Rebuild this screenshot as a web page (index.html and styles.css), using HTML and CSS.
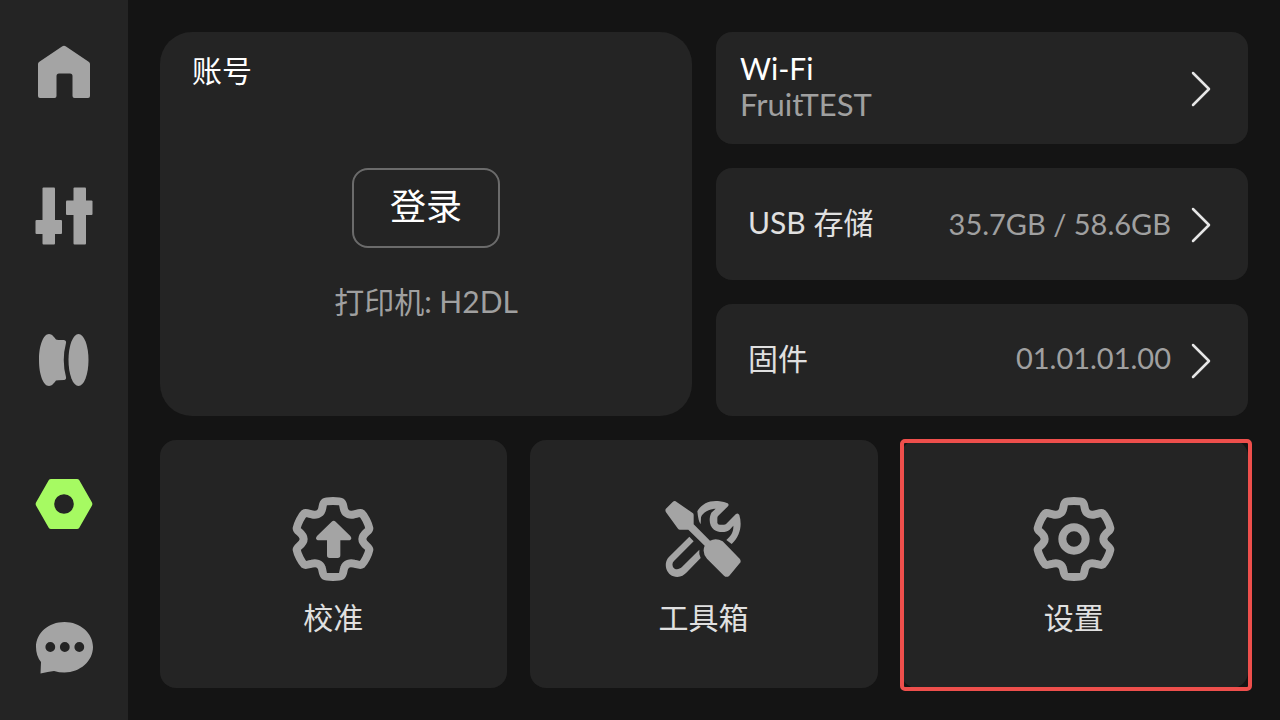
FILE: index.html
```html
<!DOCTYPE html>
<html lang="zh-CN">
<head>
<meta charset="utf-8">
<meta name="viewport" content="width=device-width, initial-scale=1">
<title>设置</title>
<link rel="stylesheet" href="styles.css">
</head>
<body>
<nav class="sidebar">
  <button class="nav-item" aria-label="主页">
    <svg width="54" height="54" viewBox="0 0 54 54"><path d="M25 1.500Q27 0 29 1.500L52 17Q53 18 53 19V51Q53 53 51 53H37.500Q35.500 53 35.500 51V31Q35.500 28.500 33 28.500H22Q19.500 28.500 19.500 31V51Q19.500 53 17.500 53H3Q1 53 1 51V19Q1 18 2 17Z"/></svg>
  </button>
  <button class="nav-item" aria-label="控制">
    <svg width="58" height="58" viewBox="0 0 58 58"><rect x="7.500" y=".5" width="12.500" height="57" rx="1"/><rect x=".5" y="33" width="26.500" height="14" rx="1"/><rect x="38.500" y=".5" width="12.500" height="57" rx="1"/><rect x="31" y="13.500" width="26.500" height="14.500" rx="1"/></svg>
  </button>
  <button class="nav-item" aria-label="耗材">
    <svg width="50" height="52" viewBox="0 0 50 52"><path d="M10 0C13 0 15 3 17 5.500Q18 6 25 6Q27.500 6.500 27 9Q22.500 26 27 43Q27.500 45.500 25 46Q18 46 17 46.500C15 49 13 52 10 52C4.500 52 0 41 0 26S4.500 0 10 0Z"/><ellipse cx="39.500" cy="26" rx="10" ry="26"/></svg>
  </button>
  <button class="nav-item nav-item-active" aria-label="设备" aria-current="page">
    <svg width="58" height="50" viewBox="0 0 58 50"><path fill-rule="evenodd" d="M16 0H42Q43.500 0 44.300 1.300L57 23.500Q57.700 25 57 26.500L44.300 48.700Q43.500 50 42 50H16Q14.500 50 13.700 48.700L1 26.500Q.3 25 1 23.500L13.700 1.300Q14.500 0 16 0ZM29 15.200A9.800 9.800 0 1 0 29 34.800A9.800 9.800 0 1 0 29 15.200Z"/></svg>
  </button>
  <button class="nav-item" aria-label="消息">
    <svg width="58" height="52" viewBox="0 0 58 52"><path fill-rule="evenodd" d="M29.500 0C45 0 58 11 58 25S45 50.500 29.500 50.500Q24 50.500 19 49Q13 49.500 5.500 51.500L6 40Q1 34 1 25C1 11 13.500 0 29.500 0ZM15.300 20.100A4.900 4.900 0 1 0 15.300 29.900A4.900 4.900 0 1 0 15.300 20.100ZM29.800 20.100A4.900 4.900 0 1 0 29.800 29.900A4.900 4.900 0 1 0 29.800 20.100ZM44.300 20.100A4.900 4.900 0 1 0 44.300 29.900A4.900 4.900 0 1 0 44.300 20.100Z"/></svg>
  </button>
</nav>
<main class="content">
  <div class="overview">
    <section class="account">
      <h1 class="account-title">账号</h1>
      <div class="account-body">
        <button class="login">登录</button>
        <p class="printer">打印机: H2DL</p>
      </div>
    </section>
    <div class="rows">
      <button class="row row-wifi">
        <span class="row-stack"><span class="row-name">Wi-Fi</span><span class="row-network">FruitTEST</span></span>
        <svg class="chevron" width="20" height="36" viewBox="0 0 20 36"><path d="M2 2L18 18L2 34"/></svg>
      </button>
      <button class="row">
        <span class="row-label">USB 存储</span>
        <span class="row-value">35.7GB / 58.6GB</span>
        <svg class="chevron" width="20" height="36" viewBox="0 0 20 36"><path d="M2 2L18 18L2 34"/></svg>
      </button>
      <button class="row">
        <span class="row-label">固件</span>
        <span class="row-value row-value-raised">01.01.01.00</span>
        <svg class="chevron" width="20" height="36" viewBox="0 0 20 36"><path d="M2 2L18 18L2 34"/></svg>
      </button>
    </div>
  </div>
  <div class="tiles">
    <button class="tile">
      <svg width="84" height="84" viewBox="64 51 252 252"><path class="gear" d="M190 63C205 63 212 64 215 66C222 71 220 80 224 91C228 103 242 106 253 103C262 101 272 97 276 100C285 108 296 130 299 145C300 154 278 160 278 177C278 194 300 200 299 209C296 224 285 246 276 254C272 257 262 253 253 251C242 248 228 251 224 263C220 274 222 283 215 288C212 290 205 291 190 291C175 291 168 290 165 288C158 283 160 274 156 263C152 251 138 248 127 251C118 253 108 257 104 254C95 246 84 224 81 209C80 200 102 194 102 177C102 160 80 154 81 145C84 130 95 108 104 100C108 97 118 101 127 103C138 106 152 103 156 91C160 80 158 71 165 66C168 64 175 63 190 63Z"/><path d="M186 125Q192 120 198 125L242 168Q249 177 240 181H212V226Q212 234 204 234H180Q172 234 172 226V181H144Q135 177 142 168Z"/></svg>
      <span>校准</span>
    </button>
    <button class="tile">
      <svg width="84" height="84" viewBox="64 51 252 252"><path d="M78 87L99 66Q105 60 111 66L159 99Q162 101 162 105V133L211 182Q229 172 249 184L300 236Q306 244 300 250L269 287Q261 294 253 287L202 236Q186 217 195 197L146 149H121Q117 149 115 146L79 97Q76 92 78 87Z"/><path d="M173 94C185 72 210 60 240 64Q254 65 264 70Q269 73 265 79L236 107Q233 110 233 114V128Q234 134 240 134H252Q257 134 260 131L288 103Q295 97 299 105C308 135 302 168 276 192L260 180C275 168 282 155 281 137L270 149C260 158 237 159 223 149C208 138 207 115 215 98L228 86C209 86 189 97 184 112L183 133Q176 125 173 94Z"/><path d="M149 170L87 232C69 251 80 291 113 291C125 290 133 285 140 278L183 234Q177 222 179 209L126 262C120 268 108 270 102 264C97 258 97 248 103 243L162 184Z"/></svg>
      <span>工具箱</span>
    </button>
    <button class="tile tile-marked">
      <svg width="84" height="84" viewBox="64 51 252 252"><path class="gear" d="M190 63C205 63 212 64 215 66C222 71 220 80 224 91C228 103 242 106 253 103C262 101 272 97 276 100C285 108 296 130 299 145C300 154 278 160 278 177C278 194 300 200 299 209C296 224 285 246 276 254C272 257 262 253 253 251C242 248 228 251 224 263C220 274 222 283 215 288C212 290 205 291 190 291C175 291 168 290 165 288C158 283 160 274 156 263C152 251 138 248 127 251C118 253 108 257 104 254C95 246 84 224 81 209C80 200 102 194 102 177C102 160 80 154 81 145C84 130 95 108 104 100C108 97 118 101 127 103C138 106 152 103 156 91C160 80 158 71 165 66C168 64 175 63 190 63Z"/><circle class="gear" cx="190" cy="177" r="35"/></svg>
      <span>设置</span>
    </button>
  </div>
</main>
</body>
</html>
```
FILE: styles.css
```css
* {
  box-sizing: border-box;
}

body {
  display: flex;
  min-height: 100vh;
  margin: 0;
  background: #141414;
  color: #e0e0e0;
  font-family: Lato, "Noto Sans CJK SC", sans-serif;
  font-size: 30px;
  line-height: 36px;
}

button {
  margin: 0;
  padding: 0;
  border: 0;
  background: none;
  color: inherit;
  font: inherit;
  cursor: pointer;
}

svg {
  display: block;
  flex: none;
  fill: #a4a4a4;
}

.sidebar {
  display: flex;
  flex: none;
  flex-direction: column;
  width: 128px;
  background: #242424;
}

.nav-item {
  display: flex;
  flex: 1;
  align-items: center;
  justify-content: center;
}

.nav-item-active svg {
  fill: #a6fa62;
}

.content {
  display: grid;
  flex: 1;
  grid-template-rows: auto 1fr;
  gap: 24px;
  padding: 32px;
}

.overview {
  display: grid;
  grid-template-columns: 1fr 1fr;
  gap: 24px;
}

.account {
  display: flex;
  flex-direction: column;
  padding: 20px 32px 97px;
  border-radius: 32px;
  background: #242424;
}

.account-title {
  margin: 0;
  color: #fff;
  font-size: 30px;
  font-weight: 400;
  line-height: 36px;
}

.account-body {
  display: flex;
  flex: 1;
  flex-direction: column;
  align-items: center;
  justify-content: flex-end;
  gap: 35px;
}

.login {
  padding: 16px 36px 20px;
  border: 2px solid #6b6b6b;
  border-radius: 16px;
  color: #fff;
  font-size: 36px;
  line-height: 40px;
}

.printer {
  margin: 0;
  color: #a0a0a0;
}

.rows {
  display: grid;
  gap: 24px;
}

.row {
  display: flex;
  align-items: center;
  min-height: 112px;
  padding: 2px 37px 0 32px;
  border-radius: 16px;
  background: #242424;
  text-align: left;
}

.row-wifi {
  justify-content: space-between;
  padding-left: 24px;
}

.row-stack {
  display: flex;
  flex-direction: column;
  padding-bottom: 6px;
}

.row-name {
  color: #fff;
}

.row-network {
  color: #a0a0a0;
  font-size: 31px;
}

.row-label {
  flex: 1;
  padding-bottom: 6px;
}

.row-value {
  padding-bottom: 2px;
  color: #a0a0a0;
  font-size: 29px;
}

.row-value-raised {
  padding-bottom: 6px;
}

.chevron {
  margin-left: 20px;
  fill: none;
  stroke: #e6e6e6;
  stroke-width: 2.500;
  stroke-linecap: round;
  stroke-linejoin: round;
}

.tiles {
  display: grid;
  grid-template-columns: repeat(3, 1fr);
  gap: 23px;
}

.tile {
  display: flex;
  position: relative;
  flex-direction: column;
  align-items: center;
  justify-content: center;
  gap: 18px;
  min-height: 248px;
  padding: 4px 1px 0 0;
  border-radius: 16px;
  background: #242424;
}

.gear {
  fill: none;
  stroke: #a4a4a4;
  stroke-width: 24;
}

.tile-marked::after {
  content: "";
  position: absolute;
  inset: -1px -4px -3px -1px;
  border: 4px solid #ee4f4c;
  border-radius: 5px;
}
```
